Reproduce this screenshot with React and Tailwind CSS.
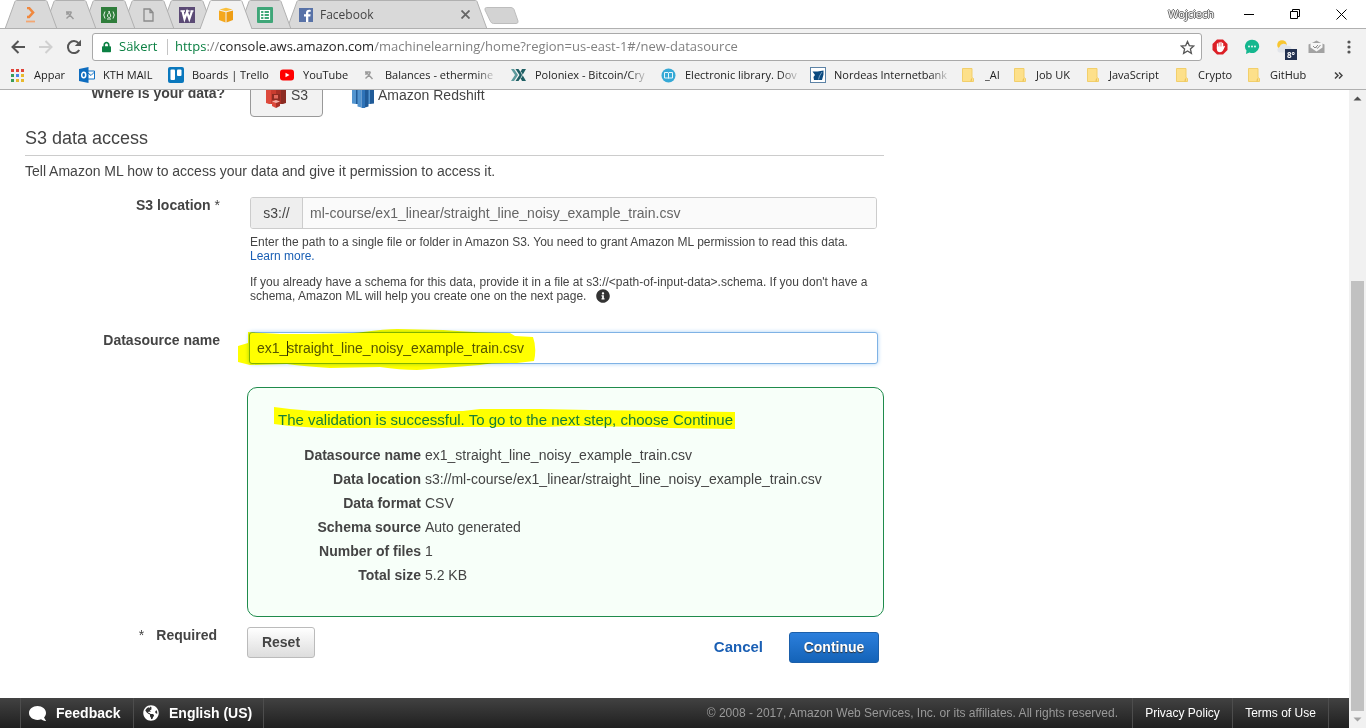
import { FaComment, FaGlobeAmericas, FaInfoCircle, FaLock } from "react-icons/fa";

/* ---------- icons ---------- */
const Stack = () => (
  <svg width="16" height="16" viewBox="0 0 16 16" fill="none" stroke="#f0883e" strokeWidth="2.6">
    <path d="M4 1h2l4 4.500-4 4.500H4" />
    <path d="M3 14.500h9" stroke="#f3a773" strokeWidth="1.8" />
  </svg>
);
const Pick = () => (
  <svg width="10" height="10" viewBox="0 0 10 10" fill="none" stroke="#9a9a9a" strokeWidth="1.4">
    <path d="M1 2h5.500M2 1.500v3.500M2.500 2.500l6 6.500M6.500 2L5 5 1.500 8.500" />
  </svg>
);
const CodeCamp = () => (
  <svg width="16" height="16" viewBox="0 0 16 16">
    <rect width="16" height="16" fill="#2f7d3b" />
    <g fill="none" stroke="#e8f3e9" strokeWidth="1">
      <path d="M4 4.500Q1.500 8 4 11.500M12 4.500Q14.500 8 12 11.500M6 12h4" />
      <path d="M8 4c1 2-2 3-1.500 5 .3 2 3.200 2 3.200 0 0-1.500-1-2-1.700-5z" />
    </g>
  </svg>
);
const Page = () => (
  <svg width="11" height="14" viewBox="0 0 11 14" fill="none" stroke="#8a8a8a" strokeWidth="1.300">
    <path d="M1 1h6l3 3.500V13H1zM7 1v3.500h3" />
  </svg>
);
const WIcon = () => (
  <svg width="16" height="16" viewBox="0 0 16 16">
    <rect width="16" height="16" fill="#5b4a75" />
    <path d="M1.500 4H6M7 4h3.500M11.500 4H14.500" stroke="#fff" strokeWidth="1.400" />
    <path d="M3.500 4l2 8 2.500-7 2.300 7L13 4" fill="none" stroke="#fff" strokeWidth="2.200" />
  </svg>
);
const Cube = () => (
  <svg width="16" height="16" viewBox="0 0 16 16">
    <path d="M8 .8L14.500 2.500 8 4.300 1.500 2.500z" fill="#fac03d" />
    <path d="M1 3.500l6.500 1.800V15.500L1 13z" fill="#f5a81c" />
    <path d="M15 3.500L8.500 5.300V15.500L15 13z" fill="#ee9d14" />
  </svg>
);
const Sheet = () => (
  <svg width="16" height="16" viewBox="0 0 16 16">
    <rect width="16" height="16" rx="1" fill="#3fa678" />
    <path d="M3.500 3.500h9v9h-9zM3.500 6.500h9M3.500 9.500h9M7 3.500v9" fill="none" stroke="#fff" strokeWidth="1.200" />
  </svg>
);
const Fb = () => (
  <svg width="14" height="14" viewBox="0 0 14 14">
    <rect width="14" height="14" fill="#5872a7" />
    <path d="M9.300 14V8.500h2l.3-2.200H9.300V5c0-.8.3-1.200 1.200-1.200h1.200V1.900c-3-.5-4.700.4-4.700 2.800v1.600H5v2.200h2V14z" fill="#fff" />
  </svg>
);
const Apps = () => (
  <svg width="13" height="13" viewBox="0 0 13 13">
    {["#e0443a", "#e0443a", "#e0443a", "#3a9d58", "#4a86e8", "#e8b92c", "#3a9d58", "#e8b92c", "#e8b92c"].map((c, i) => (
      <rect key={i} x={(i % 3) * 5} y={Math.floor(i / 3) * 5} width="3" height="3" fill={c} />
    ))}
  </svg>
);
const Outlook = () => (
  <svg width="16" height="16" viewBox="0 0 16 16">
    <path d="M9 4h6.500v8H9M9 6l3 2.500L15.500 5" fill="#fff" stroke="#1272c4" />
    <path d="M0 2l9.500-2v16L0 14z" fill="#0f6dbf" />
    <ellipse cx="4.700" cy="8" rx="2" ry="2.700" fill="none" stroke="#fff" strokeWidth="1.500" />
  </svg>
);
const Trello = () => (
  <svg width="16" height="16" viewBox="0 0 16 16">
    <rect width="16" height="16" rx="2" fill="#0a78bd" />
    <rect x="2.500" y="2.500" width="4.500" height="10.500" rx="1" fill="#fff" />
    <rect x="9" y="2.500" width="4.500" height="6.500" rx="1" fill="#fff" />
  </svg>
);
const YouTube = () => (
  <svg width="14" height="12" viewBox="0 0 14 12">
    <rect y=".5" width="14" height="11" rx="3" fill="#f00" />
    <path d="M5.500 3.700v4.600l4-2.300z" fill="#fff" />
  </svg>
);
const Polo = () => (
  <svg width="15" height="12" viewBox="0 0 15 12">
    <path d="M0 0h3l4 6-4 6H0l4-6z" fill="#5d9a9c" />
    <path d="M4.500 0h3l2 3L11 0h4l-3.500 6 3.500 6h-4L9.500 9l-2 3h-3l4-6z" fill="#1f5f64" />
    <path d="M10 3l1.500 3L10 9" fill="none" stroke="#f2f2f2" strokeWidth=".8" />
  </svg>
);
const Library = () => (
  <svg width="15" height="15" viewBox="0 0 15 15">
    <circle cx="7.500" cy="7.500" r="7" fill="#35a9d6" />
    <path d="M3.500 4.500h3.500l.5.5.5-.5h3.500v5.500H8l-.5.500-.5-.5H3.500zM7.500 5v5" fill="none" stroke="#e6f6fc" />
  </svg>
);
const Nordea = () => (
  <svg width="16" height="16" viewBox="0 0 16 16">
    <rect x=".5" y=".5" width="15" height="15" fill="#fff" stroke="#5d83a6" />
    <path d="M2.500 4.500h5l6-1v4l-1.500 5.500H4L3.500 10 5 8z" fill="#0b4a80" />
    <path d="M8.500 12.500L9.500 9 12 5" fill="none" stroke="#9fc0dc" strokeWidth=".7" />
  </svg>
);
const Folder = () => (
  <svg width="12" height="14" viewBox="0 0 12 14">
    <path d="M.5.5h9.500v9l1.500 1V13.500H.5z" fill="#fde08a" stroke="#f2cf6b" />
    <path d="M9.500 10.500L9 13.500" stroke="#e8be50" />
  </svg>
);
const Back = ({ color }) => (
  <svg width="14" height="14" viewBox="0 0 14 14" fill="none" stroke={color} strokeWidth="2">
    <path d="M14 7H1.500M7.500 1L1.500 7l6 6" />
  </svg>
);
const Reload = () => (
  <svg width="16" height="16" viewBox="0 0 16 16">
    <path d="M13.200 11A6 6 0 1 1 12.500 4.200" fill="none" stroke="#555" strokeWidth="2" />
    <path d="M15 .8V7H8.800z" fill="#555" />
  </svg>
);
const Star = () => (
  <svg width="15" height="15" viewBox="0 0 15 15">
    <path d="M7.500 1.500l1.800 4.100 4.400.4-3.300 2.900 1 4.400-3.900-2.300-3.900 2.300 1-4.400L1.300 6l4.400-.4z" fill="none" stroke="#555" strokeWidth="1.300" />
  </svg>
);
const AdBlock = () => (
  <svg width="16" height="16" viewBox="0 0 16 16">
    <path d="M5 .5h6L15.500 5v6L11 15.500H5L.5 11V5z" fill="#dc1f26" />
    <path d="M5.500 5v5M7.200 3.800V9M9 3.500V9M10.600 4.500v5" stroke="#fff" strokeWidth="1.300" strokeLinecap="round" />
    <path d="M4.900 7.500h6.300l1.500-.8q.5.500 0 1.300L11 11.500q-1 1.700-3 1.700-3 0-3.100-3z" fill="#fff" />
  </svg>
);
const Chat = () => (
  <svg width="16" height="16" viewBox="0 0 16 16">
    <path d="M8 .8a7 6.600 0 1 1-2.500 12.700L2 15l.5-3.500A7 6.600 0 0 1 8 .8z" fill="#15b78f" />
    <circle cx="5" cy="7.500" r=".9" fill="#fff" /><circle cx="8" cy="7.500" r=".9" fill="#fff" /><circle cx="11" cy="7.500" r=".9" fill="#fff" />
  </svg>
);
const Cloud = () => (
  <svg width="16" height="14" viewBox="0 0 16 14">
    <circle cx="6" cy="5" r="4.800" fill="#f8c630" />
    <path d="M3 12.500a3 3 0 0 1 .5-5.500A4.300 4.300 0 0 1 11.500 6a3 3 0 0 1 1.500 6.500z" fill="#e2e5ea" />
  </svg>
);
const MailIcon = () => (
  <svg width="17" height="14" viewBox="0 0 17 14">
    <path d="M.5 4.500L5 2.500 8.500.5l3.500 2 4.500 2v8.500H.5z" fill="#a2a2a2" />
    <path d="M2.500 3h12v4.500L8.500 11.500 2.500 7.500z" fill="#f6f6f6" />
    <path d="M5 6l2 2 3-3M8.500 7.500l1 .8L12.500 5" fill="none" stroke="#8a8a8a" />
  </svg>
);
const S3Icon = () => (
  <svg width="20" height="26" viewBox="0 0 20 26">
    <path d="M0 3h5v19H3L0 21z" fill="#dd4a3c" />
    <path d="M5 1l5-1v22H5z" fill="#c93c2f" />
    <path d="M10 0l5 1v21h-5z" fill="#a93026" />
    <path d="M15 3h5v18l-3 1h-2z" fill="#8c2b22" />
    <path d="M6 12h8v6H6z" fill="#8c2b22" />
    <path d="M8 13h4v3.500H8z" fill="#e3685c" />
    <path d="M6 19.500l4 1.500v5l-4-2z" fill="#dd4a3c" />
    <path d="M14 19.500L10 21v5l4-2z" fill="#a93026" />
    <path d="M6 19.500l4-1.500 4 1.500-4 1.500z" fill="#f6b0a8" />
  </svg>
);
const Redshift = () => (
  <svg width="22" height="27" viewBox="0 0 22 27">
    <path d="M0 4l4-1v20l-4-.5z" fill="#5294cf" />
    <path d="M4 2h2v21H4z" fill="#205b98" />
    <path d="M18 3l4 1v18.500l-4 .5z" fill="#205b98" />
    <path d="M16 2h2v21h-2z" fill="#5294cf" />
    <path d="M5.500 1h4v25.500l-4-1z" fill="#5294cf" />
    <path d="M9.500 0h3.500v27H9.500z" fill="#2e73b8" />
    <path d="M13 1h3.500v24.500l-3.500 1z" fill="#205b98" />
  </svg>
);

/* ---------- browser chrome ---------- */
const tabs = [
  { name: "Stack", Icon: Stack, z: "z-[8]" },
  { name: "Pool", Icon: Pick, z: "z-[7]" },
  { name: "Camp", Icon: CodeCamp, z: "z-[6]" },
  { name: "Page", Icon: Page, z: "z-[5]" },
  { name: "Wiki", Icon: WIcon, z: "z-[4]" },
  { name: "Amazon ML", Icon: Cube, z: "z-[9]", active: true },
  { name: "Sheet", Icon: Sheet, z: "z-[2]" },
];

function TabShape({ width, active }) {
  return (
    <svg className="absolute inset-0" width={width} height="29" viewBox={`0 0 ${width} 29`}>
      <path
        d={`M1 29L11 1.500Q11.500 .5 12.500 .5H${width - 12.5}Q${width - 11.5} .5 ${width - 11} 1.500L${width - 1} 29`}
        fill={active ? "#f2f2f2" : "#d9d9d9"}
        stroke="#b0b0b0"
      />
      {!active && <path d={`M0 28.500H${width}`} stroke="#b0b0b0" />}
    </svg>
  );
}

function TabStrip() {
  return (
    <div className="flex h-[29px] items-start border-b border-[#b0b0b0] bg-white pl-1">
      {tabs.map(({ name, Icon, z, active }) => (
        <button key={name} aria-label={name} className={`relative -mr-[15px] flex h-[29px] w-[54px] shrink-0 items-center justify-center ${z}`}>
          <TabShape width={54} active={active} />
          <span className="relative"><Icon /></span>
        </button>
      ))}
      <button className="relative z-[1] ml-[9px] flex h-[29px] w-[202px] shrink-0 items-center pl-[13px] text-left text-[12px] text-[#444]">
        <TabShape width={202} />
        <span className="relative"><Fb /></span>
        <span className="relative ml-[7px] grow">Facebook</span>
        <svg className="relative mr-[18px]" width="9" height="9" viewBox="0 0 9 9" stroke="#666" strokeWidth="1.800"><path d="M.5.5l8 8M8.500.5l-8 8" /></svg>
      </button>
      <button aria-label="New tab" className="-ml-1 mt-[7px]">
        <svg width="35" height="17" viewBox="0 0 35 17"><path d="M2.500.5h24.500q2 0 3 2l4 11.500q.5 2.500-2 2.500H9.500q-2 0-3-2L1 3Q.5.5 2.500.5z" fill="#d3d3d3" stroke="#bdbdbd" /></svg>
      </button>
      <div className="ml-auto flex h-[28px] items-center text-[11px] text-white">
        <span className="mr-[30px] [text-shadow:1px_0_0_#666,-1px_0_0_#666,0_1px_0_#666,0_-1px_0_#666]">Wojciech</span>
        <button aria-label="Minimize" className="mr-9"><svg width="10" height="10"><path d="M0 5.500h10" stroke="#000" /></svg></button>
        <button aria-label="Restore" className="mr-9">
          <svg width="10" height="10" fill="none" stroke="#000"><path d="M.5 2.500h7v7h-7zM2.500 2.500v-2h7v7h-2" /></svg>
        </button>
        <button aria-label="Close" className="mr-[19px]"><svg width="11" height="11" stroke="#000"><path d="M.5.5l10 10M10.500.5l-10 10" /></svg></button>
      </div>
    </div>
  );
}

function Toolbar() {
  return (
    <div className="flex h-[36px] items-center bg-[#f2f2f2] pl-[11px]">
      <button aria-label="Back"><Back color="#555" /></button>
      <button aria-label="Forward" className="ml-[14px] rotate-180"><Back color="#d0d0d0" /></button>
      <button aria-label="Reload" className="ml-[13px]"><Reload /></button>
      <div className="ml-[10px] flex h-7 grow items-center rounded-[3px] border border-[#a9a9a9] bg-white pl-[9px] pr-[6px] text-[13px]">
        <FaLock className="h-[12px] w-[9px] text-[#0b8043]" />
        <span className="ml-[8px] w-[40px] whitespace-nowrap text-[#0b8043]">Säkert</span>
        <span className="ml-[8px] h-4 w-px bg-[#c4c4c4]" />
        <span className="ml-[7px] grow whitespace-nowrap text-[#808080]">
          <span className="text-[#0b8043]">https</span>://<span className="text-[#222]">console.aws.amazon.com</span>/machinelearning/home?region=us-east-1#/new-datasource
        </span>
        <button aria-label="Bookmark"><Star /></button>
      </div>
      <div className="flex items-center">
        <button aria-label="Ad blocker" className="ml-[10px]"><AdBlock /></button>
        <button aria-label="Chat" className="ml-4"><Chat /></button>
        <button aria-label="Weather" className="relative ml-4">
          <Cloud />
          <span className="absolute top-[9px] left-[9px] flex h-[11px] w-3 items-center justify-center bg-[#22304f] text-[8px] font-bold text-white">8°</span>
        </button>
        <button aria-label="Mail" className="ml-4"><MailIcon /></button>
        <button aria-label="Menu" className="mr-[15px] ml-[22px]">
          <svg width="4" height="14" fill="#555"><circle cx="2" cy="2" r="1.600" /><circle cx="2" cy="7" r="1.600" /><circle cx="2" cy="12" r="1.600" /></svg>
        </button>
      </div>
    </div>
  );
}

const bookmarks = [
  { label: "Appar", Icon: Apps, box: "w-[68px]", gap: "gap-[10px]" },
  { label: "KTH MAIL", Icon: Outlook, box: "w-[89px]", gap: "gap-[8px]" },
  { label: "Boards | Trello", Icon: Trello, box: "w-[112px]", gap: "gap-[8px]" },
  { label: "YouTube", Icon: YouTube, box: "w-[84px]", gap: "gap-[9px]" },
  { label: "Balances - ethermine", Icon: Pick, box: "w-[147px]", gap: "gap-[11px]", fade: true },
  { label: "Poloniex - Bitcoin/Cry", Icon: Polo, box: "w-[150px]", gap: "gap-[9px]", fade: true },
  { label: "Electronic library. Dov", Icon: Library, box: "w-[149px]", gap: "gap-[9px]", fade: true },
  { label: "Nordeas Internetbank", Icon: Nordea, box: "w-[152px]", gap: "gap-[8px]", fade: true },
  { label: "_AI", Icon: Folder, box: "w-[52px]", gap: "gap-[11px]" },
  { label: "Job UK", Icon: Folder, box: "w-[73px]", gap: "gap-[10px]" },
  { label: "JavaScript", Icon: Folder, box: "w-[89px]", gap: "gap-[10px]" },
  { label: "Crypto", Icon: Folder, box: "w-[72px]", gap: "gap-[10px]" },
  { label: "GitHub", Icon: Folder, box: "w-[75px]", gap: "gap-[10px]" },
];

function BookmarkBar() {
  return (
    <nav className="flex h-[25px] items-center border-b border-[#b0b0b0] bg-[#f2f2f2] pb-[4px] pl-[11px] text-[11px] text-[#222]">
      {bookmarks.map(({ label, Icon, box, gap, fade }) => (
        <a key={label} href="#" className={`flex shrink-0 items-center ${box} ${gap}`}>
          <span className="shrink-0"><Icon /></span>
          <span className={`whitespace-nowrap ${fade ? "[mask-image:linear-gradient(to_right,black_85%,#0003)]" : ""}`}>{label}</span>
        </a>
      ))}
      <button aria-label="More bookmarks" className="mr-[23px] ml-auto">
        <svg width="9" height="7" fill="none" stroke="#444" strokeWidth="1.500"><path d="M1 .5l3 3-3 3M5 .5l3 3-3 3" /></svg>
      </button>
    </nav>
  );
}

/* ---------- form ---------- */
const summary = [
  ["Datasource name", "ex1_straight_line_noisy_example_train.csv"],
  ["Data location", "s3://ml-course/ex1_linear/straight_line_noisy_example_train.csv"],
  ["Data format", "CSV"],
  ["Schema source", "Auto generated"],
  ["Number of files", "1"],
  ["Total size", "5.2 KB"],
];

function Form() {
  return (
    <form className="-mt-4 max-w-[884px] pl-[25px] text-[14px] leading-4" onSubmit={(e) => e.preventDefault()}>
      <div className="flex h-[43px]">
        <span className="mt-[11px] w-[200px] shrink-0 text-right font-bold">Where is your data?</span>
        <button type="button" className="ml-[25px] flex w-[73px] items-center rounded-[4px] border border-[#999] bg-[#f2f2f2] pb-[2px] pl-[15px]">
          <S3Icon /><span className="ml-[5px]">S3</span>
        </button>
        <button type="button" className="ml-[29px] flex items-center pb-[2px]">
          <Redshift /><span className="ml-[4px]">Amazon Redshift</span>
        </button>
      </div>
      <h2 className="mt-[9px] border-b border-[#ccc] pb-[5px] text-[18px] leading-6">S3 data access</h2>
      <p className="mt-[5px] leading-5">Tell Amazon ML how to access your data and give it permission to access it.</p>

      <div className="mt-4 flex">
        <label htmlFor="loc" className="w-[195px] shrink-0 text-right font-bold">S3 location <span className="font-normal">*</span></label>
        <div className="ml-[30px] grow pr-[7px]">
          <div className="flex h-8 overflow-hidden rounded-[3px] border border-[#ccc]">
            <span className="flex w-[52px] items-center justify-center border-r border-[#ccc] bg-[#eee]">s3://</span>
            <input id="loc" readOnly className="grow bg-[#fafafa] px-[7px] text-[#666] outline-none" value="ml-course/ex1_linear/straight_line_noisy_example_train.csv" />
          </div>
          <p className="mt-[6px] text-[12px] leading-[14px]">
            Enter the path to a single file or folder in Amazon S3. You need to grant Amazon ML permission to read this data.<br />
            <a href="#" className="text-[#1a5fb4]">Learn more.</a>
          </p>
          <p className="mt-3 text-[12px] leading-[14px]">
            If you already have a schema for this data, provide it in a file at s3://&lt;path-of-input-data&gt;.schema. If you don't have a<br />
            schema, Amazon ML will help you create one on the next page.
            <FaInfoCircle className="-mt-px ml-[10px] inline h-[14px] w-[14px] text-[#333]" />
          </p>
        </div>
      </div>

      <div className="mt-[29px] flex">
        <label htmlFor="name" className="w-[195px] shrink-0 text-right font-bold">Datasource name</label>
        <div className="relative ml-[29px] mr-[6px] grow">
          <input id="name" className="block h-8 w-full rounded-[3px] border border-[#7fb2e5] bg-white px-[7px] text-[#555] shadow-[0_0_4px_#a9d0f5] outline-none" defaultValue="ex1_straight_line_noisy_example_train.csv" />
          <span className="absolute top-[9px] left-[38px] h-[15px] w-px bg-[#333]" />
          <svg className="pointer-events-none absolute -top-1 -left-[11px] mix-blend-multiply" width="300" height="44" viewBox="238 328 300 44">
            <path d="M238 346L248 343V332L280 334Q350 334 363 332Q385 329 397 329L443 330Q480 333 510 333L515 336 533 337Q537 348 534 361L517 363Q490 363 480 365L443 368 417 370Q400 370 380 367L330 368Q300 366 287 364L250 365 238 362z" fill="#ff0" />
          </svg>
        </div>
      </div>

      <section className="mt-[23px] ml-[222px] rounded-[10px] border border-[#1f8b4c] bg-[#f7fff9] px-[30px] pt-[22px] pb-[29px]">
        <p className="relative text-[15px] leading-5 text-[#1a7f37]">
          <svg className="absolute -top-[3px] -left-1" width="462" height="26" viewBox="274 407 462 26">
            <path d="M274 407L290 409 313 411H463L480 409H540L590 410 670 411 735 412V429L670 428 655 427 570 426 545 427H463L410 428H320L290 426 274 424z" fill="#ff0" />
          </svg>
          <span className="relative">The validation is successful. To go to the next step, choose Continue</span>
        </p>
        <table className="mt-[13px] leading-6">
          <tbody>
            {summary.map(([k, v]) => (
              <tr key={k}>
                <th scope="row" className="w-[143px] p-0 text-right font-bold">{k}</th>
                <td className="py-0 pl-1">{v}</td>
              </tr>
            ))}
          </tbody>
        </table>
      </section>

      <div className="mt-[10px] flex items-start">
        <span className="w-[192px] text-right font-bold"><span className="mr-3 font-normal">*</span>Required</span>
        <button type="reset" className="ml-[30px] h-[31px] w-[68px] rounded-[3px] border border-[#bbb] bg-gradient-to-b from-white to-[#ddd] pb-[2px] font-bold">Reset</button>
        <button type="button" className="mt-[5px] ml-auto h-[31px] pb-[2px] text-[15px] font-bold text-[#1a5fb4]">Cancel</button>
        <button type="submit" className="mt-[5px] mr-[5px] ml-[26px] h-[31px] w-[90px] rounded-[3px] border border-[#1b5faa] bg-gradient-to-b from-[#2b7fdc] to-[#1463b8] pb-[2px] font-bold text-white [text-shadow:0_1px_1px_#333]">Continue</button>
      </div>
    </form>
  );
}

function Footer() {
  return (
    <footer className="flex h-[30px] shrink-0 items-center bg-gradient-to-b from-[#424242] to-[#202020] px-[20px] text-[12px] text-white">
      <button className="flex h-full w-[114px] items-center border-x border-[#4d4d4d] pl-2 text-[14px] font-bold">
        <FaComment className="mr-[10px] h-[17px] w-[17px] -scale-x-100" />Feedback
      </button>
      <button className="flex h-full w-[130px] items-center border-r border-[#4d4d4d] pl-[9px] text-[14px] font-bold">
        <FaGlobeAmericas className="mr-[10px] h-4 w-4" />English (US)
      </button>
      <span className="mr-[14px] ml-auto text-[#999]">© 2008 - 2017, Amazon Web Services, Inc. or its affiliates. All rights reserved.</span>
      <a href="#" className="flex h-full w-[101px] items-center justify-center border-x border-[#4d4d4d]">Privacy Policy</a>
      <a href="#" className="flex h-full w-[96px] items-center justify-center border-r border-[#4d4d4d]">Terms of Use</a>
    </footer>
  );
}

export default function App() {
  return (
    <div className="flex h-screen flex-col overflow-hidden bg-white font-['Open_Sans',sans-serif]">
      <header className="shrink-0">
        <TabStrip />
        <Toolbar />
        <BookmarkBar />
      </header>
      <div className="flex min-h-0 grow font-['Liberation_Sans',Arial,sans-serif] text-[#444]">
        <div className="flex min-w-0 grow flex-col">
          <main className="min-h-0 grow overflow-hidden"><Form /></main>
          <Footer />
        </div>
        <div className="flex w-[17px] shrink-0 flex-col items-center bg-[#f1f1f1]">
          <svg width="17" height="17" fill="#505050"><path d="M4.500 10.500l4-4 4 4z" /></svg>
          <div className="mt-[174px] w-[13px] grow bg-[#c1c1c1]" />
          <svg width="17" height="17" fill="#a3a3a3"><path d="M4.500 6.500l4 4 4-4z" /></svg>
        </div>
      </div>
    </div>
  );
}
